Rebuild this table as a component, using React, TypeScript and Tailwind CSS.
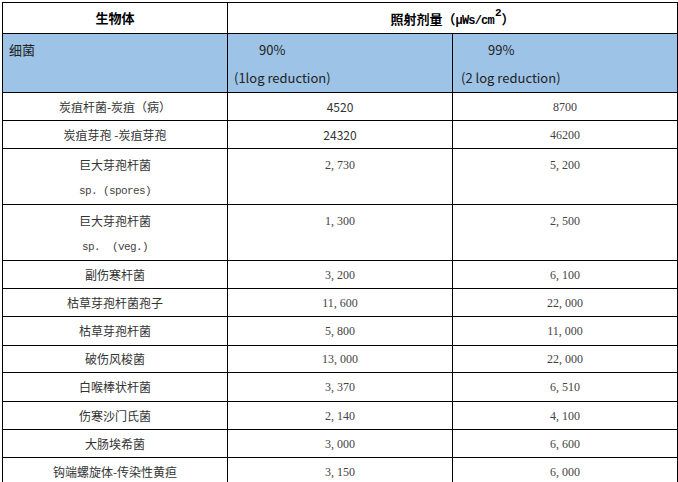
type Row = {
  name: string;
  sub?: string;
  d90: string;
  d99: string;
  sans90?: boolean;
  h: string;
};

const rows: Row[] = [
  { name: "炭疽杆菌-炭疽（病）", d90: "4520", d99: "8700", sans90: true, h: "h-[28px]" },
  { name: "炭疽芽孢 -炭疽芽孢", d90: "24320", d99: "46200", sans90: true, h: "h-[28px]" },
  { name: "巨大芽孢杆菌", sub: "sp. (spores)", d90: "2, 730", d99: "5, 200", h: "h-[55px]" },
  { name: "巨大芽孢杆菌", sub: "sp.  (veg.)", d90: "1, 300", d99: "2, 500", h: "h-[56px]" },
  { name: "副伤寒杆菌", d90: "3, 200", d99: "6, 100", h: "h-[28px]" },
  { name: "枯草芽孢杆菌孢子", d90: "11, 600", d99: "22, 000", h: "h-[28px]" },
  { name: "枯草芽孢杆菌", d90: "5, 800", d99: "11, 000", h: "h-[29px]" },
  { name: "破伤风梭菌", d90: "13, 000", d99: "22, 000", h: "h-[27px]" },
  { name: "白喉棒状杆菌", d90: "3, 370", d99: "6, 510", h: "h-[29px]" },
  { name: "伤寒沙门氏菌", d90: "2, 140", d99: "4, 100", h: "h-[28px]" },
  { name: "大肠埃希菌", d90: "3, 000", d99: "6, 600", h: "h-[28px]" },
  { name: "钩端螺旋体-传染性黄疸", d90: "3, 150", d99: "6, 000", h: "h-[28px]" },
];

const cjk = "font-['Noto_Sans_CJK_SC','Noto_Sans',sans-serif]";
const num =
  "font-['Liberation_Serif',serif] text-[12px] text-[#444] whitespace-pre";

export default function App() {
  return (
    <div className="w-[678px] h-[482px] bg-white pt-[2px] pl-[2px]">
      <table className={`w-[675px] table-fixed border-collapse ${cjk}`}>
        <colgroup>
          <col className="w-[225px]" />
          <col className="w-[225px]" />
          <col className="w-[225px]" />
        </colgroup>
        <thead>
          <tr className="h-[31px]">
            <th className="border border-black p-0 text-center align-middle text-[13px] font-bold text-black">
              生物体
            </th>
            <th
              colSpan={2}
              className="border border-black p-0 pt-[2px] text-center align-middle text-[13px] font-bold text-black"
            >
              照射剂量（
              <span className="font-['Liberation_Mono',monospace] text-[12px] tracking-[-0.8px]">
                μWs/cm
              </span>
              <span className="relative -top-[8px] ml-[1px] font-['Liberation_Mono',monospace] text-[11px]">
                2
              </span>
              ）
            </th>
          </tr>
        </thead>
        <tbody>
          <tr className="h-[56px] bg-[#9dc3e6] text-[13px] text-[#222]">
            <td className="border border-black px-[6px] pt-[2px] align-top leading-[28px]">细菌</td>
            <td className="border border-black px-[6px] pt-[2px] align-top leading-[28px]">
              <div className="pl-[25px]">90%</div>
              <div>(1log reduction)</div>
            </td>
            <td className="border border-black px-[8px] pt-[2px] align-top leading-[28px]">
              <div className="pl-[27px]">99%</div>
              <div>(2 log reduction)</div>
            </td>
          </tr>
          {rows.map((r, i) => (
            <tr key={i} className={r.h}>
              <td
                className={`border border-black p-0 text-center text-[12px] text-[#333] ${
                  r.sub ? "align-top pt-[3px] leading-[26px]" : "align-middle"
                }`}
              >
                <div>{r.name}</div>
                {r.sub && (
                  <div className="font-['Liberation_Mono',monospace] text-[11px] tracking-[-0.6px] text-[#444] whitespace-pre">
                    {r.sub}
                  </div>
                )}
              </td>
              <td
                className={`border border-black p-0 text-center ${
                  r.sans90 ? "text-[12px] text-[#333]" : num
                } ${r.sub ? "align-top pt-[3px] leading-[26px]" : "align-middle"}`}
              >
                {r.d90}
              </td>
              <td
                className={`border border-black p-0 text-center ${num} ${
                  r.sub ? "align-top pt-[3px] leading-[26px]" : "align-middle"
                }`}
              >
                {r.d99}
              </td>
            </tr>
          ))}
        </tbody>
      </table>
    </div>
  );
}
